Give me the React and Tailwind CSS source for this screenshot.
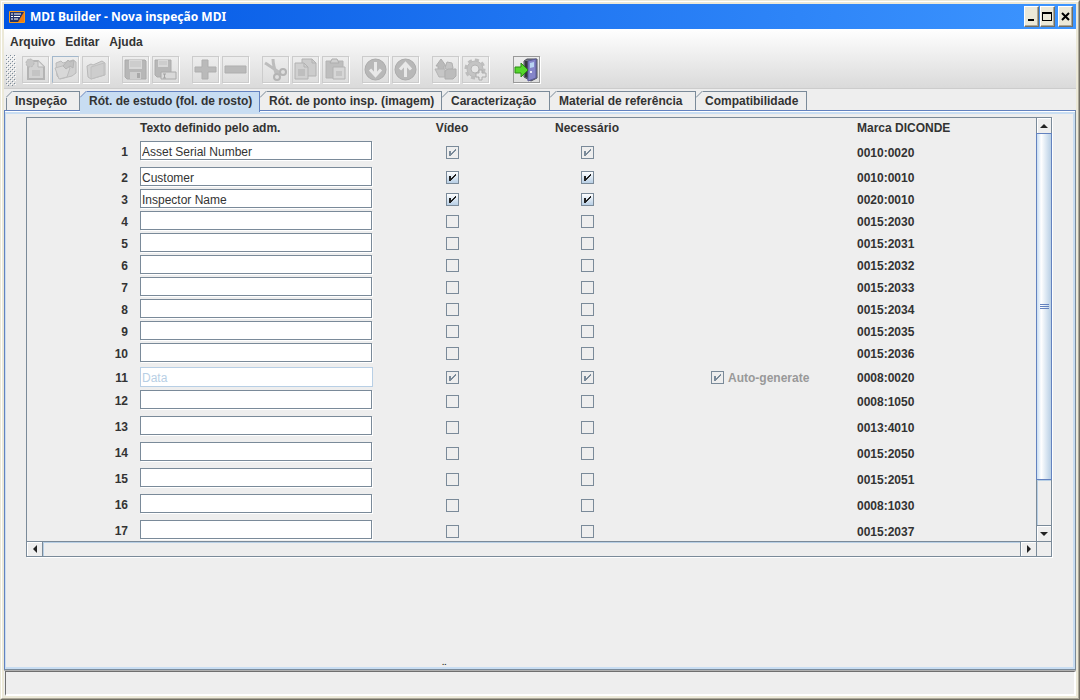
import { useState } from 'react'

const TABS = [
  { id: 'inspection', label: 'Inspeção', width: 'w-[74px]' },
  { id: 'study', label: 'Rót. de estudo (fol. de rosto)', width: 'w-[180px]' },
  { id: 'point', label: 'Rót. de ponto insp. (imagem)', width: 'w-[182px]' },
  { id: 'characterization', label: 'Caracterização', width: 'w-[108px]' },
  { id: 'material', label: 'Material de referência', width: 'w-[146px]' },
  { id: 'compatibility', label: 'Compatibilidade', width: 'w-[111px]' },
]

const ROWS = [
  { text: 'Asset Serial Number', tag: '0010:0020', checked: true, locked: true, tall: true },
  { text: 'Customer', tag: '0010:0010', checked: true },
  { text: 'Inspector Name', tag: '0020:0010', checked: true },
  { text: '', tag: '0015:2030', locked: true },
  { text: '', tag: '0015:2031', locked: true },
  { text: '', tag: '0015:2032', locked: true },
  { text: '', tag: '0015:2033', locked: true },
  { text: '', tag: '0015:2034', locked: true },
  { text: '', tag: '0015:2035', locked: true },
  { text: '', tag: '0015:2036', locked: true },
  { text: 'Data', tag: '0008:0020', checked: true, locked: true, auto: true },
  { text: '', tag: '0008:1050', locked: true, tall: true },
  { text: '', tag: '0013:4010', locked: true, tall: true },
  { text: '', tag: '0015:2050', locked: true, tall: true },
  { text: '', tag: '0015:2051', locked: true, tall: true },
  { text: '', tag: '0008:1030', locked: true, tall: true },
  { text: '', tag: '0015:2037', locked: true, tall: true },
]

function rowHeight(row) {
  if (row.auto) return 'h-[25px]'
  return row.tall ? 'h-[26px]' : 'h-[22px]'
}

const ICONS = {
  new: (
    <>
      <path d="M5 4h10l6 6v12H5z" fill="#d2d2d2" stroke="#b4b4b4" strokeWidth="2" />
      <path d="M15 4v6h6" fill="#e2e2e2" stroke="#b4b4b4" />
      <path d="M9 13h8v6H9z" fill="#c4c4c4" />
      <circle cx="7" cy="6" r="4" fill="#c6c6c6" stroke="#b8b8b8" strokeDasharray="2 1" />
    </>
  ),
  open: (
    <>
      <path d="M3 6l5-2 2 2 10-3 3 2v11l-4 3-12 3-3-3z" fill="#d0d0d0" stroke="#bababa" />
      <path d="M2 11l11-3 4 3-3 9-8 2z" fill="#d8d8d8" stroke="#bcbcbc" />
      <path d="M10 9l5-6 2 2 4-2-1 8-3-2-4 3z" fill="#c2c2c2" stroke="#b4b4b4" />
    </>
  ),
  folder: (
    <>
      <path d="M4 9l4-2 2 1 9-4 3 2v12L8 22l-3-2z" fill="#d3d3d3" stroke="#b8b8b8" />
      <path d="M8 10l13-4v12L8 22z" fill="#cdcdcd" stroke="#bfbfbf" />
    </>
  ),
  save: (
    <>
      <path d="M2 3h20l1 1v18H4l-2-2z" fill="#b7b7b7" stroke="#acacac" />
      <path d="M6 3h13v9H6z" fill="#d8d8d8" />
      <path d="M7 5h11M7 7h11M7 9h11" stroke="#c2c2c2" />
      <path d="M7 15h11v7H7z" fill="#cecece" />
      <path d="M14 16h3v5h-3z" fill="#a9a9a9" />
    </>
  ),
  saveAs: (
    <>
      <path d="M2 3h16v17H4l-2-2z" fill="#b7b7b7" stroke="#acacac" />
      <path d="M5 3h10v7H5z" fill="#d8d8d8" />
      <path d="M6 5h8M6 7h8" stroke="#c2c2c2" />
      <path d="M8 15h15v7H8z" fill="#d9d9d9" stroke="#aaaaaa" />
      <path d="M10 17h3M10 21h3M11.500 17v4" stroke="#a4a4a4" />
    </>
  ),
  add: <path d="M9 3h6v7h8v5h-8v7H9v-7H2v-5h7z" fill="#bababa" stroke="#afafaf" />,
  remove: <path d="M2 9h21v7H2z" fill="#bababa" stroke="#afafaf" />,
  cut: (
    <>
      <path d="M2 6c5 3 9 6 15 10M10 2c0 5 1 9 4 17" fill="none" stroke="#bdbdbd" strokeWidth="3" />
      <circle cx="20" cy="15" r="3" fill="#dedede" stroke="#b4b4b4" strokeWidth="2" />
      <circle cx="14" cy="20" r="3" fill="#dedede" stroke="#b4b4b4" strokeWidth="2" />
    </>
  ),
  copy: (
    <>
      <path d="M9 2h10l4 4v13H9z" fill="#cccccc" stroke="#b2b2b2" />
      <path d="M2 6h9l4 4v12H2z" fill="#d0d0d0" stroke="#b2b2b2" />
      <path d="M5 12h7v7H5z" fill="#bebebe" />
      <path d="M11 6v4h4M19 2v4h4" fill="none" stroke="#b2b2b2" />
    </>
  ),
  paste: (
    <>
      <path d="M3 4h17v17H3z" fill="#bebebe" stroke="#b4b4b4" />
      <path d="M7 6l2-4h5l2 4z" fill="#d0d0d0" stroke="#adadad" />
      <path d="M10 10h12v12H10z" fill="#d6d6d6" stroke="#b2b2b2" />
      <path d="M13 14h6v5h-6z" fill="#c4c4c4" />
    </>
  ),
  down: (
    <>
      <circle cx="12.500" cy="12.500" r="10.500" fill="#b8b8b8" stroke="#acacac" />
      <path d="M12.500 5v13M7 12.500l5.500 6 5.500-6" fill="none" stroke="#e8e8e8" strokeWidth="3" />
    </>
  ),
  up: (
    <>
      <circle cx="12.500" cy="12.500" r="10.500" fill="#b8b8b8" stroke="#acacac" />
      <path d="M12.500 20V7M7 12.500l5.500-6 5.500 6" fill="none" stroke="#e8e8e8" strokeWidth="3" />
    </>
  ),
  shapes: (
    <>
      <path d="M8 2l5 7h-2v5H5V9H3z" fill="#bababa" stroke="#aeaeae" />
      <path d="M2 12h10v8H6z" fill="#c6c6c6" stroke="#b4b4b4" />
      <path d="M14 5l5 1 1 5-4 3-4-3z" fill="#c4c4c4" stroke="#b0b0b0" />
      <path d="M12 14l3-2h8v7l-3 3h-8z" fill="#bcbcbc" stroke="#aeaeae" />
    </>
  ),
  settings: (
    <>
      <circle cx="12" cy="12" r="8" fill="#c4c4c4" stroke="#b9b9b9" />
      <circle cx="12" cy="12" r="9" fill="none" stroke="#bdbdbd" strokeWidth="3" strokeDasharray="4 3" />
      <circle cx="12" cy="12" r="4" fill="#e6e6e6" stroke="#b4b4b4" />
      <path d="M16 13h3v3h4v4h-4v3h-3v-3h-3v-4h3z" fill="#e4e4e4" stroke="#acacac" />
    </>
  ),
  exit: (
    <>
      <path d="M10 4l3-2h10v19l-6 3-7-4z" fill="#777a86" stroke="#4c4e5c" />
      <path d="M11 4h3v17l-3-1z" fill="#36383f" />
      <path d="M14 4l8-2v19l-8 3z" fill="#8585c9" stroke="#5b5b9a" />
      <path d="M16 6l4-1v5l-4 1z" fill="#b9d4f2" />
      <path d="M16 14h2v2h-2z" fill="#e8e8f8" />
      <path d="M1 10h6V6l7 7-7 7v-4H1z" fill="#55d62c" stroke="#2b8a12" />
    </>
  ),
}

const TOOL_GROUPS = [
  [['new', 'Novo'], ['open', 'Abrir'], ['folder', 'Fechar']],
  [['save', 'Salvar'], ['saveAs', 'Salvar como']],
  [['add', 'Adicionar'], ['remove', 'Remover']],
  [['cut', 'Recortar'], ['copy', 'Copiar'], ['paste', 'Colar']],
  [['down', 'Mover para baixo'], ['up', 'Mover para cima']],
  [['shapes', 'Formas'], ['settings', 'Configurar']],
]

function ToolButton({ icon, label, active, hot }) {
  const border = active ? 'border-[#999999]' : hot ? 'border-[#cccccc] border-t-[#a3b8cc] border-l-[#a3b8cc]' : 'border-[#cccccc]'
  return (
    <button
      type="button"
      aria-label={label}
      disabled={!active}
      className={`flex size-[27px] items-center justify-center border shadow-[1px_1px_0_#ffffff] ${border}`}
    >
      <svg viewBox="0 0 25 25" className="size-[25px]" aria-hidden="true">{ICONS[icon]}</svg>
    </button>
  )
}

function TitleBar() {
  const button = 'flex h-[21px] w-[15px] items-center justify-center border border-t-white border-l-white border-r-[#716f64] border-b-[#716f64] bg-[#ece9d8] shadow-[inset_-1px_-1px_0_#aca899]'
  return (
    <header className="flex h-[25px] shrink-0 items-center bg-linear-to-r from-[#0054e3] to-[#3d95ff] pr-[3px] pl-[5px]">
      <svg viewBox="0 0 16 12" className="h-3 w-4" aria-hidden="true">
        <path d="M.5.5h15v11H.5z" fill="#23346e" stroke="#f59a1d" />
        <path d="M15 1v10H9z" fill="#f07d13" />
        <path d="M2 3h2M2 5.500h2M2 8h2M5 3h7M5 5.500h6M5 8h4" stroke="#ffffff" />
      </svg>
      <h1 className="ml-[5px] font-['Noto_Sans',sans-serif] text-[12px] font-bold text-white">MDI Builder - Nova inspeção MDI</h1>
      <div className="ml-auto flex">
        <button type="button" aria-label="Minimizar" className={button}>
          <svg viewBox="0 0 11 11" className="size-[11px]" shapeRendering="crispEdges"><path d="M2 8h6v2H2z" /></svg>
        </button>
        <button type="button" aria-label="Maximizar" className={`ml-px ${button}`}>
          <svg viewBox="0 0 11 11" className="size-[11px] shrink-0" shapeRendering="crispEdges"><path fillRule="evenodd" d="M0 1h10v9H0zM1 3h8v6H1z" /></svg>
        </button>
        <button type="button" aria-label="Fechar" className={`ml-[3px] ${button}`}>
          <svg viewBox="0 0 11 11" className="size-[11px]"><path d="M2 2l7 7M9 2l-7 7" stroke="#000000" strokeWidth="2" /></svg>
        </button>
      </div>
    </header>
  )
}

function Grip() {
  return (
    <svg className="mr-[6px] h-[31px] w-[10px]" shapeRendering="crispEdges" aria-hidden="true">
      <defs>
        <pattern id="grip" width="4" height="4" patternUnits="userSpaceOnUse">
          <path d="M0 0h1v1H0zM2 2h1v1H2z" fill="#7a8a99" />
          <path d="M1 1h1v1H1zM3 3h1v1H3z" fill="#ffffff" />
        </pattern>
      </defs>
      <rect width="10" height="31" fill="url(#grip)" />
    </svg>
  )
}

function Tab({ tab, first, selected, onSelect }) {
  const fill = selected ? '#c8ddf2' : '#eeeeee'
  const line = selected ? '#6382bf' : '#7a8a99'
  return (
    <button
      type="button"
      role="tab"
      aria-selected={selected}
      onClick={onSelect}
      className={`relative shrink-0 border-t border-r text-left whitespace-nowrap ${tab.width} ${
        selected ? 'z-10 h-[21px] border-[#6382bf] bg-[#c8ddf2] pb-[3px]' : 'h-[19px] border-[#7a8a99] bg-[#eeeeee] pb-px'
      } ${first ? 'border-l pl-2' : 'pl-[9px]'}`}
    >
      <svg viewBox="0 0 7 7" className={`absolute -top-px size-[7px] ${first ? '-left-px' : 'left-0'}`} aria-hidden="true">
        <path d="M0 0h7v7H0z" fill="#eeeeee" />
        <path d="M0 7l7-7v7z" fill={fill} />
        <path d="M0 6.500L6.500 0" stroke={line} />
      </svg>
      {tab.label}
    </button>
  )
}

function Check({ label, checked, disabled, onChange }) {
  return (
    <span className="relative inline-block size-[13px] align-middle">
      <input
        type="checkbox"
        aria-label={label}
        checked={checked}
        disabled={disabled}
        onChange={onChange}
        className="block size-[13px] appearance-none border border-[#7a8a99] enabled:bg-linear-to-b enabled:from-white enabled:to-[#b8cfe5]"
      />
      {checked ? (
        <svg viewBox="0 0 13 13" className="pointer-events-none absolute inset-0 size-[13px]" aria-hidden="true">
          <path
            d="M3 5H5V7H6V6H7V5H8V4H9V3H10V5H9V6H8V7H7V8H6V9H5V10H3Z"
            fill={disabled ? '#7a8a99' : '#222222'}
          />
        </svg>
      ) : null}
    </span>
  )
}

function LabelTable({ rows, update }) {
  return (
    <table className="w-full table-fixed border-collapse">
      <colgroup>
        <col className="w-[113px]" />
        <col className="w-[244px]" />
        <col className="w-[136px]" />
        <col className="w-[134px]" />
        <col className="w-[203px]" />
        <col />
      </colgroup>
      <thead>
        <tr className="h-[22px]">
          <td />
          <th className="pb-0.5 text-left">Texto definido pelo adm.</th>
          <th className="pb-0.5">Vídeo</th>
          <th className="pb-0.5">Necessário</th>
          <td />
          <th className="pb-0.5 text-left">Marca DICONDE</th>
        </tr>
      </thead>
      <tbody>
        {rows.map((row, i) => (
          <tr key={row.tag} className={rowHeight(row)}>
            <th className={`pr-3 text-right leading-4 ${row.tall ? 'pb-0.5' : 'pt-0.5'}`}>
              <label htmlFor={`text-${i}`}>{i + 1}</label>
            </th>
            <td className={row.auto ? 'align-middle' : 'pt-px align-top'}>
              <input
                id={`text-${i}`}
                type="text"
                value={row.text}
                disabled={row.auto}
                onChange={(e) => update(i, { text: e.target.value })}
                className={`block border bg-white px-px pt-0.5 text-[12px] font-normal ${
                  row.auto ? 'h-5 w-[233px] border-[#b8cfe5] text-[#b8cfe5]' : 'h-[19px] w-[232px] border-[#7a8a99] text-[#333333] shadow-[1px_1px_0_#ffffff]'
                }`}
              />
            </td>
            <td className={`text-center leading-4 ${row.tall ? 'pb-0.5' : ''}`}>
              <Check label={`Vídeo ${i + 1}`} checked={row.video} disabled={row.locked} onChange={() => update(i, { video: !row.video })} />
            </td>
            <td className={`text-center leading-4 ${row.tall ? 'pb-0.5' : ''}`}>
              <Check label={`Necessário ${i + 1}`} checked={row.required} disabled={row.locked} onChange={() => update(i, { required: !row.required })} />
            </td>
            <td className="pl-[57px] text-[#999999]">
              {row.auto ? (
                <label className="flex items-center gap-[4px] pt-0.5 leading-4">
                  <Check label="Auto-generate" checked disabled />
                  Auto-generate
                </label>
              ) : null}
            </td>
            <td className={`leading-4 ${row.tall ? '' : 'pt-0.5'}`}>{row.tag}</td>
          </tr>
        ))}
      </tbody>
    </table>
  )
}

function Arrow({ d }) {
  return (
    <svg viewBox="0 0 10 10" className="size-[10px] shrink-0" aria-hidden="true">
      <path d={d} fill="#222222" />
    </svg>
  )
}

function VerticalBar() {
  return (
    <div className="flex w-4 shrink-0 flex-col border-x border-[#7a8a99]">
      <button type="button" aria-label="Rolar para cima" className="flex h-[15px] shrink-0 items-center justify-center shadow-[inset_1px_1px_0_#ffffff]">
        <Arrow d="M1 7l4-4 4 4z" />
      </button>
      <div className="-mx-px flex h-[347px] shrink-0 flex-col items-center justify-center gap-px border border-[#6382bf] bg-linear-to-r from-[#c8ddf2] via-white via-30% to-[#b8cfe5]">
        <span className="h-px w-[9px] bg-[#6382bf]" />
        <span className="h-px w-[9px] bg-[#6382bf]" />
        <span className="h-px w-[9px] bg-[#6382bf]" />
      </div>
      <div className="flex-1 shadow-[inset_1px_1px_0_#b8cfe5]" />
      <button type="button" aria-label="Rolar para baixo" className="flex h-4 shrink-0 items-center justify-center border-t border-[#7a8a99] shadow-[inset_1px_1px_0_#ffffff]">
        <Arrow d="M1 3h8l-4 4z" />
      </button>
    </div>
  )
}

function HorizontalBar() {
  return (
    <div className="flex h-4 shrink-0 border-y border-[#7a8a99]">
      <button type="button" aria-label="Rolar para a esquerda" className="flex w-4 items-center justify-center border-r border-[#7a8a99] shadow-[inset_1px_1px_0_#ffffff]">
        <Arrow d="M7 1v8L3 5z" />
      </button>
      <div className="flex-1 shadow-[inset_1px_1px_0_#b8cfe5]" />
      <button type="button" aria-label="Rolar para a direita" className="flex w-4 items-center justify-center border-l border-[#7a8a99] shadow-[inset_1px_1px_0_#ffffff]">
        <Arrow d="M3 1v8l4-4z" />
      </button>
      <div className="w-4 border-x border-[#7a8a99]" />
    </div>
  )
}

export default function App() {
  const [selected, setSelected] = useState('study')
  const [rows, setRows] = useState(() => ROWS.map((row) => ({ ...row, video: Boolean(row.checked), required: Boolean(row.checked) })))

  const update = (index, fields) => {
    setRows((current) => current.map((row, i) => (i === index ? { ...row, ...fields } : row)))
  }

  return (
    <div className="flex h-screen flex-col border border-t-[#ece9d8] border-l-[#ece9d8] border-r-[#716f64] border-b-[#716f64] font-['Liberation_Sans',Arial,sans-serif] text-[12px] font-bold text-[#333333]">
      <div className="flex min-h-0 flex-1 flex-col border border-t-white border-l-white border-r-[#aca899] border-b-[#aca899] bg-[#ece9d8] p-0.5">
        <TitleBar />
        <div className="flex min-h-0 flex-1 flex-col bg-[#eeeeee]">
          <div className="border-b border-[#cccccc] bg-linear-to-b from-white to-[#dadada]">
            <nav className="flex h-[26px] items-center gap-[10px] pl-[6px]">
              <button type="button">Arquivo</button>
              <button type="button">Editar</button>
              <button type="button">Ajuda</button>
            </nav>
            <div className="flex h-[33px] items-start pl-[2px]" role="toolbar">
              <Grip />
              <div className="flex gap-[13px] pt-px">
                {TOOL_GROUPS.map((group) => (
                  <div key={group[0][0]} className="flex gap-[3px]">
                    {group.map(([icon, label]) => <ToolButton key={icon} icon={icon} label={label} hot={icon === 'open'} />)}
                  </div>
                ))}
                <div className="pl-[11px]">
                  <ToolButton icon="exit" label="Sair" active />
                </div>
              </div>
            </div>
          </div>
          <div className="mt-[2px] flex h-[19px] shrink-0 items-start pl-[2px]" role="tablist">
            {TABS.map((tab, i) => (
              <Tab key={tab.id} tab={tab} first={i === 0} selected={tab.id === selected} onSelect={() => setSelected(tab.id)} />
            ))}
          </div>
          <main className="flex min-h-0 flex-1 flex-col border border-[#7a8a99] border-t-[#6382bf] border-l-[#6382bf]">
            <div className="flex min-h-0 flex-1 flex-col border-t border-white">
              <div className="flex min-h-0 flex-1 flex-col border-2 border-l border-[#c8ddf2] pt-[3px]">
                <section className="mr-[21px] ml-5 flex h-[440px] shrink-0 flex-col border-t border-l border-[#7a8a99] shadow-[1px_1px_0_#ffffff]">
                  <div className="flex min-h-0 flex-1">
                    <div className="min-w-0 flex-1 overflow-hidden">
                      <LabelTable rows={rows} update={update} />
                    </div>
                    <VerticalBar />
                  </div>
                  <HorizontalBar />
                </section>
                <p className="mt-auto pl-[436px] text-[8px] leading-[8px]">..</p>
              </div>
            </div>
          </main>
          <footer className="h-[26px] shrink-0 border-t border-[#b0b0b0]">
            <div className="ml-px h-full border-t border-l border-[#6f6f6f] border-r-2 border-r-white border-b-2 border-b-white" />
          </footer>
        </div>
      </div>
    </div>
  )
}
